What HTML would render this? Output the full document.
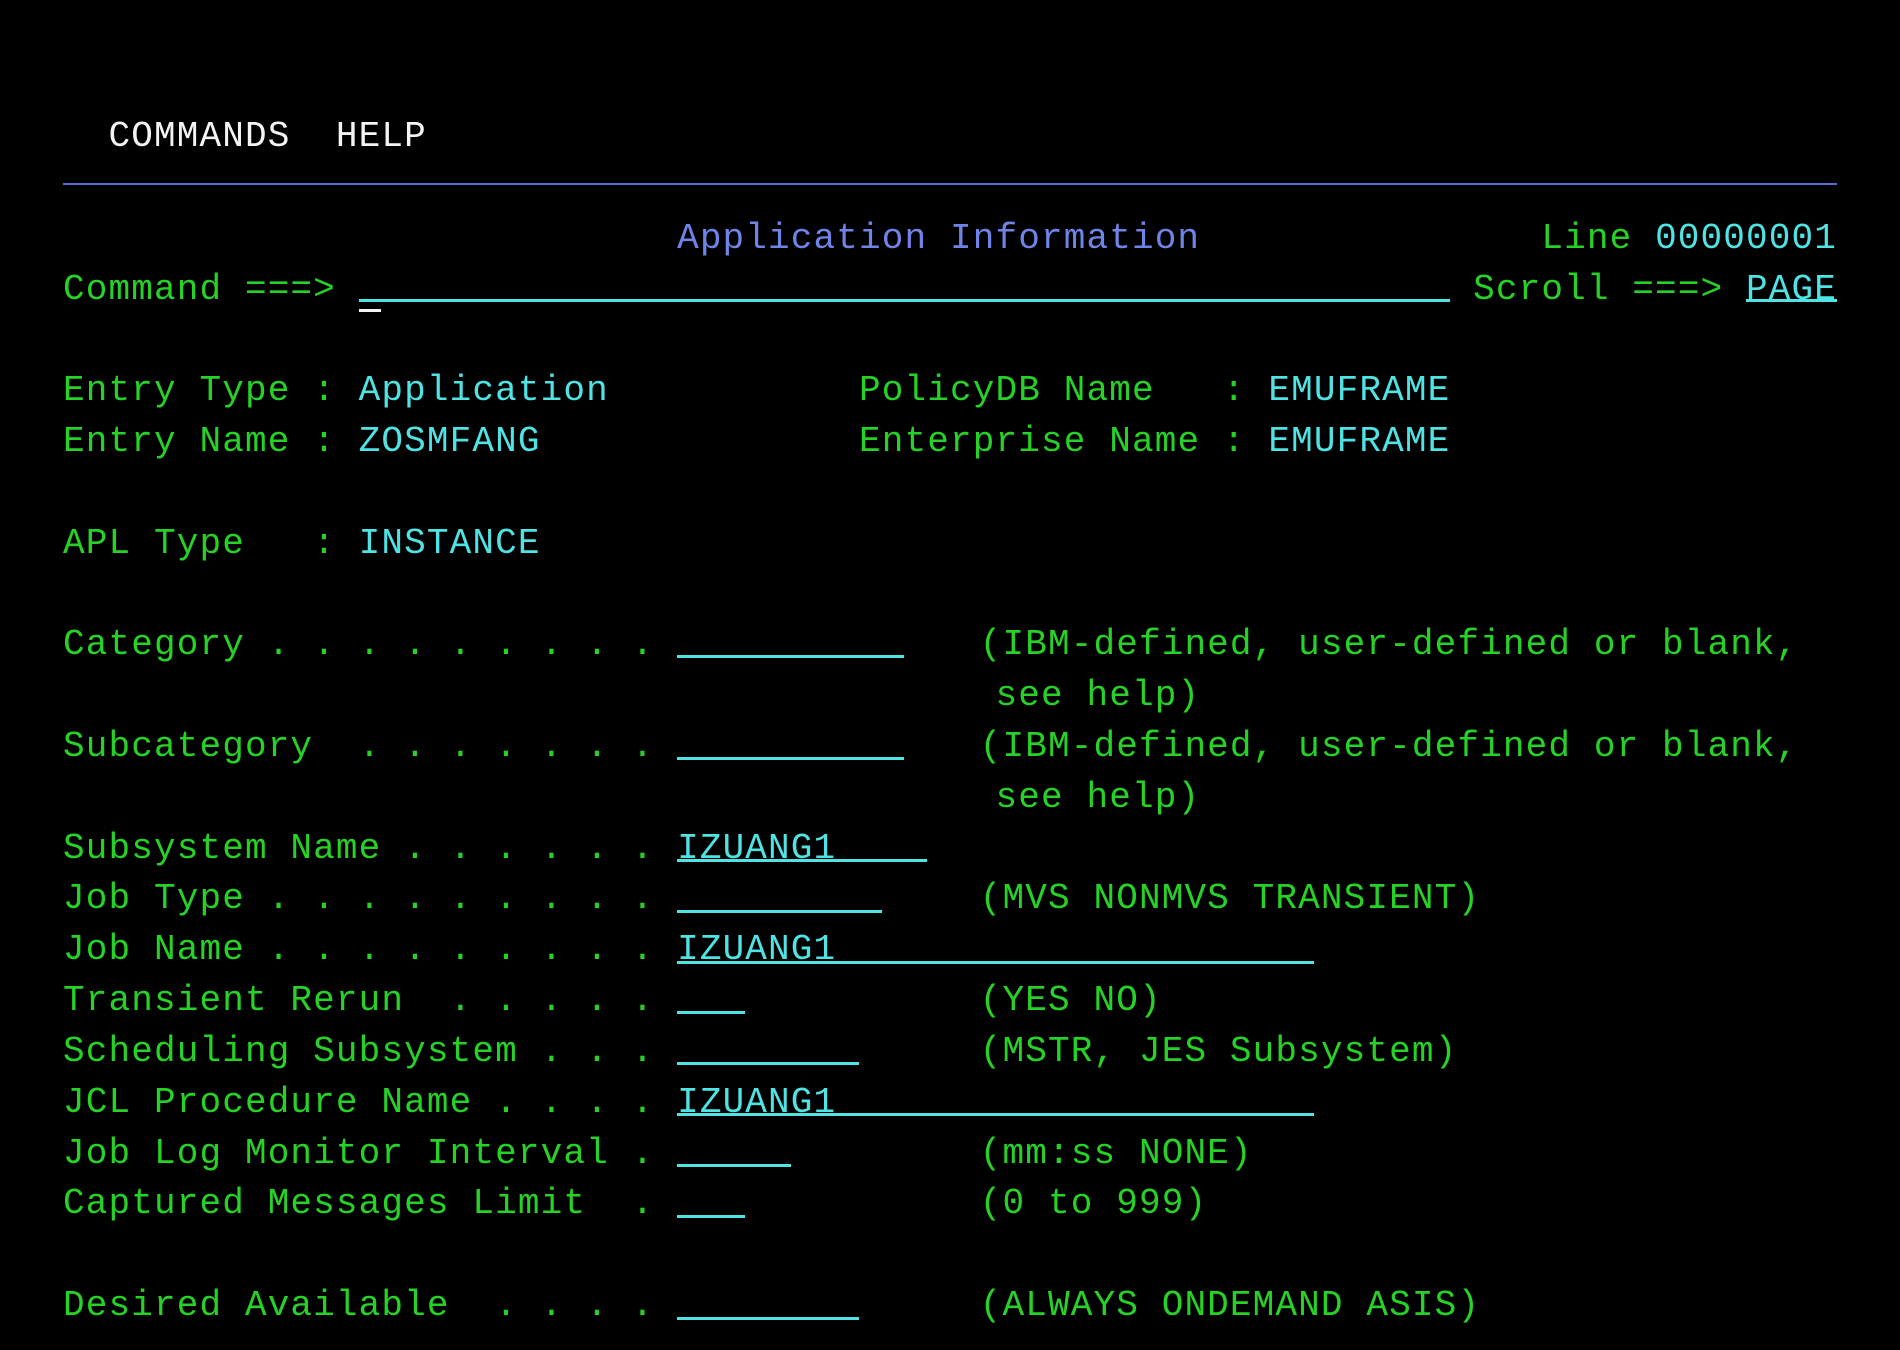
<!DOCTYPE html>
<html><head><meta charset="utf-8">
<style>
html,body{margin:0;padding:0;background:#000;}
body{width:1900px;height:1350px;position:relative;overflow:hidden;}
.r{position:absolute;left:63px;margin:0;height:51px;line-height:51px;font-family:"Liberation Mono",monospace;font-size:36px;letter-spacing:1.14px;white-space:pre;color:#27d227;}
.c{color:#4fe3e3;}
.b{color:#7083e6;}
.w{color:#f4f4f4;}
.p{position:relative;left:7px;}
.u{position:absolute;height:3px;background:#4fe3e3;}
</style></head><body>
<div class="r w" style="top:111px">  COMMANDS  HELP</div>
<div style="position:absolute;left:63px;top:183px;width:1774px;height:2px;background:#5a6ad8"></div>
<div class="r" style="top:213px"><span class="b">                           Application Information</span>               Line <span class="c">00000001</span></div>
<div class="r" style="top:264px">Command ===>                                                  Scroll ===> <span class="c">PAGE</span></div>
<div class="r" style="top:365px">Entry Type : <span class="c">Application</span>           PolicyDB Name   : <span class="c">EMUFRAME</span></div>
<div class="r" style="top:416px">Entry Name : <span class="c">ZOSMFANG</span>              Enterprise Name : <span class="c">EMUFRAME</span></div>
<div class="r" style="top:518px">APL Type   : <span class="c">INSTANCE</span></div>
<div class="r" style="top:619px">Category . . . . . . . . .              <span class="p">(IBM-defined, user-defined or blank,</span></div>
<div class="r" style="top:670px">                                         see help)</div>
<div class="r" style="top:721px">Subcategory  . . . . . . .              <span class="p">(IBM-defined, user-defined or blank,</span></div>
<div class="r" style="top:772px">                                         see help)</div>
<div class="r" style="top:823px">Subsystem Name . . . . . . <span class="c">IZUANG1</span></div>
<div class="r" style="top:873px">Job Type . . . . . . . . .              <span class="p">(MVS NONMVS TRANSIENT)</span></div>
<div class="r" style="top:924px">Job Name . . . . . . . . . <span class="c">IZUANG1</span></div>
<div class="r" style="top:975px">Transient Rerun  . . . . .              <span class="p">(YES NO)</span></div>
<div class="r" style="top:1026px">Scheduling Subsystem . . .              <span class="p">(MSTR, JES Subsystem)</span></div>
<div class="r" style="top:1077px">JCL Procedure Name . . . . <span class="c">IZUANG1</span></div>
<div class="r" style="top:1128px">Job Log Monitor Interval .              <span class="p">(mm:ss NONE)</span></div>
<div class="r" style="top:1178px">Captured Messages Limit  .              <span class="p">(0 to 999)</span></div>
<div class="r" style="top:1280px">Desired Available  . . . .              <span class="p">(ALWAYS ONDEMAND ASIS)</span></div>

<div class="u" style="left:359px;top:299px;width:1091px"></div>
<div class="u" style="left:1746px;top:299px;width:91px"></div>
<div style="position:absolute;left:359px;top:309px;width:22px;height:3px;background:#f4f4f4"></div>
<div class="u" style="left:677px;top:655px;width:227px"></div>
<div class="u" style="left:677px;top:757px;width:227px"></div>
<div class="u" style="left:677px;top:859px;width:250px"></div>
<div class="u" style="left:677px;top:910px;width:205px"></div>
<div class="u" style="left:677px;top:961px;width:637px"></div>
<div class="u" style="left:677px;top:1011px;width:68px"></div>
<div class="u" style="left:677px;top:1062px;width:182px"></div>
<div class="u" style="left:677px;top:1113px;width:637px"></div>
<div class="u" style="left:677px;top:1164px;width:114px"></div>
<div class="u" style="left:677px;top:1215px;width:68px"></div>
<div class="u" style="left:677px;top:1317px;width:182px"></div>
</body></html>
